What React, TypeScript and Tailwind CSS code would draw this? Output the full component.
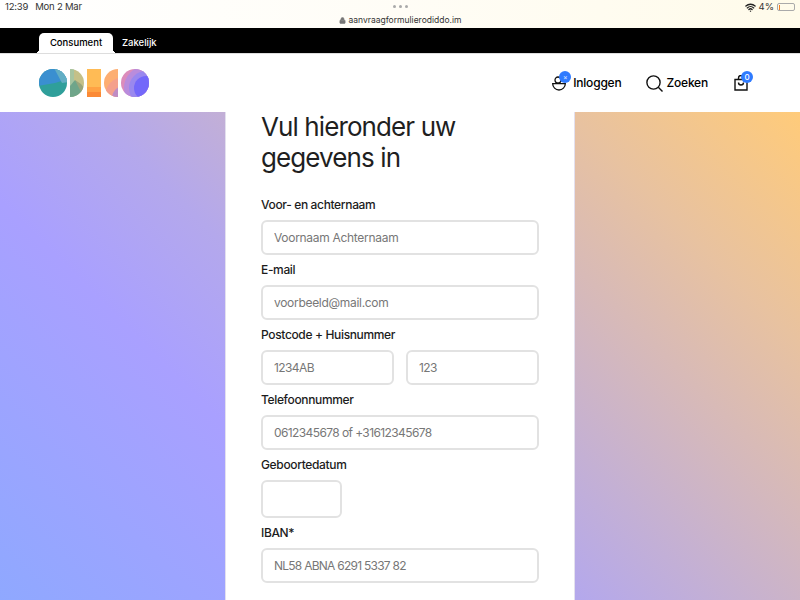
import { Lock, Wifi } from 'lucide-react';

const sans = "font-['Inter','Noto_Sans',sans-serif]";
const inputClass = "block h-[35px] rounded-md border-2 border-[#e2e2e2] bg-white px-[11px] text-[12px] placeholder:text-[#777]";

function Logo() {
    return (
        <svg width="112" height="30" viewBox="0 0 112 30" className="block">
            <defs>
                <clipPath id="c1"><circle cx="15" cy="15" r="14" /></clipPath>
                <clipPath id="c2"><path d="M32 1a14 14 0 0 1 0 28z" /></clipPath>
                <clipPath id="c3"><rect x="49" y="1" width="14" height="28" /></clipPath>
                <clipPath id="c4"><path d="M80 1a14 14 0 0 0 0 28z" /></clipPath>
                <clipPath id="c5"><circle cx="97" cy="15" r="14" /></clipPath>
            </defs>
            <g clipPath="url(#c1)">
                <rect width="30" height="30" fill="#2f9f9a" />
                <path d="M0 0h30v11l-13 4-17 3z" fill="#3a8fd0" />
                <path d="M16 0h14v14l-6 1z" fill="#62aec4" />
            </g>
            <g clipPath="url(#c2)">
                <rect x="32" width="15" height="30" fill="#c4c088" />
                <path d="M32 0h4v30h-4z" fill="#a6c4a0" />
                <path d="M32 29V18l5-6 9 10-8 8z" fill="#6fa58a" />
                <path d="M37 12l6 4 4 5-4 3z" fill="#9aa57c" />
            </g>
            <g clipPath="url(#c3)">
                <rect x="49" width="14" height="30" fill="#ffbb55" />
                <rect x="49" y="19" width="14" height="5" fill="#ffa244" />
                <rect x="49" y="24" width="14" height="6" fill="#fb8a36" />
            </g>
            <g clipPath="url(#c4)">
                <rect x="66" width="14" height="30" fill="#fdae72" />
                <circle cx="86" cy="28" r="19" fill="#f4a08c" />
                <circle cx="86" cy="30" r="12" fill="#bf8cc4" />
            </g>
            <g clipPath="url(#c5)">
                <rect x="83" width="28" height="30" fill="#dc8cbc" />
                <circle cx="108" cy="20" r="22" fill="#b98cdc" />
                <circle cx="108" cy="20" r="17" fill="#9a88ee" />
                <circle cx="108" cy="20" r="12" fill="#7468fa" />
            </g>
        </svg>
    );
}

function Field({ label, placeholder, tracking }: { label: string; placeholder: string; tracking: string }) {
    return (
        <div>
            <label className="block h-5 text-[12px] leading-5 font-medium tracking-[-0.35px] text-[#1c1c1c]">{label}</label>
            <input className={`${inputClass} my-[5px] w-full ${tracking}`} placeholder={placeholder} />
        </div>
    );
}

export default function App() {
    return (
        <div className={`flex h-[600px] w-[800px] flex-col overflow-hidden bg-white ${sans}`}>
            <div className="relative h-7 bg-gradient-to-r from-white via-[#fffdf6] to-[#fffbea] text-[#333]">
                <div className="flex items-center justify-between pl-[5px] pr-[5px] pt-[1px]">
                    <div className="flex gap-[7px] text-[9.5px] leading-3 tracking-[-0.2px]"><span>12:39</span><span>Mon 2 Mar</span></div>
                    <div className="flex items-center gap-[3px] text-[9.5px] leading-3">
                        <Wifi size={11} strokeWidth={3} className="text-[#222]" />
                        <span>4%</span>
                        <span className="flex h-[8px] w-[18px] items-center rounded-[2px] border border-[#aaa] pl-[1px]">
                            <span className="h-[5px] w-[1px] bg-[#f57c1f]" />
                        </span>
                    </div>
                </div>
                <div className="absolute inset-x-0 top-[5px] flex justify-center gap-[3px]">
                    <span className="size-[3px] rounded-full bg-[#aaa]" />
                    <span className="size-[3px] rounded-full bg-[#aaa]" />
                    <span className="size-[3px] rounded-full bg-[#aaa]" />
                </div>
                <div className="absolute inset-x-0 top-[14px] flex items-center justify-center gap-[3px] text-[8.5px] leading-3">
                    <Lock size={7} className="text-[#777]" fill="#777" />
                    <span>aanvraagformulierodiddo.im</span>
                </div>
            </div>

            <div className="flex h-[25px] items-end bg-black pl-[39px] text-[9.5px] font-medium">
                <div className="relative flex h-[20px] w-[74px] items-center justify-center rounded-t-[5px] bg-white text-black">
                    Consument
                    <span className="absolute bottom-0 left-[-4px] size-1 bg-[radial-gradient(circle_at_0_0,transparent_4px,white_4px)]" />
                    <span className="absolute bottom-0 right-[-4px] size-1 bg-[radial-gradient(circle_at_100%_0,transparent_4px,white_4px)]" />
                </div>
                <div className="flex h-[20px] items-center pl-[9px] text-white">Zakelijk</div>
            </div>

            <header className="flex h-[59px] items-center justify-between border-t border-[#ddd] bg-white pl-[38px] pr-[51px]">
                <Logo />
                <nav className="flex items-center text-[12px] font-medium tracking-[-0.2px] text-black">
                    <div className="flex items-center gap-[7px]">
                        <span className="relative block h-4 w-[14px]">
                            <svg width="14" height="16" viewBox="0 0 14 16" fill="none" stroke="#111" strokeWidth="1.3" className="absolute left-0 top-0">
                                <circle cx="6" cy="5" r="3" />
                                <path d="M.7 8.7h12.6a6.3 6.3 0 0 1-12.6 0z" />
                            </svg>
                            <span className="absolute left-[7px] top-[-4px] flex size-[12px] items-center justify-center rounded-full bg-[#2f7bff] text-[7px] leading-none text-[#cfe0ff]">×</span>
                        </span>
                        <span>Inloggen</span>
                    </div>
                    <div className="ml-[24px] flex items-center gap-[4px]">
                        <svg width="17" height="17" viewBox="0 0 17 17" fill="none" stroke="#111" strokeWidth="1.4">
                            <circle cx="7.5" cy="7.5" r="6.6" />
                            <path d="M12.3 12.3l4.2 4.2" />
                        </svg>
                        <span>Zoeken</span>
                    </div>
                    <div className="relative ml-[25px] size-[16px]">
                        <svg width="14" height="16" viewBox="0 0 14 16" fill="none" stroke="#111" strokeWidth="1.4" className="absolute left-[1px] top-0">
                            <path d="M1 4.5h12v10.5H1z" />
                            <path d="M4.5 4.5V3a2.5 2.5 0 0 1 5 0v1.5" />
                            <path d="M4.5 7.5a2.5 2.5 0 0 0 5 0" />
                        </svg>
                        <span className="absolute left-[8px] top-[-4px] flex size-[12px] items-center justify-center rounded-full bg-[#2f7bff] text-[8px] leading-none text-white">0</span>
                    </div>
                </nav>
            </header>

            <main className="flex min-h-0 flex-1 justify-center bg-[linear-gradient(45deg,#8fa8ff,#a9a0ff_31%,#b4a8ec_45%,#ccb4c8_62%,#e8c2a0_82%,#ffcb7a)]">
                <div className="h-full w-[350px] border-x border-[#e3e0ee] bg-white px-[35px] text-[#1c1c1c]">
                    <h1 className="-mt-px text-[26px] leading-[31px] font-normal tracking-[-0.9px] text-[#1f1f1f]">Vul hieronder uw<br />gegevens in</h1>
                    <div className="mt-[22px]">
                        <Field label="Voor- en achternaam" placeholder="Voornaam Achternaam" tracking="tracking-[-0.3px]" />
                        <Field label="E-mail" placeholder="voorbeeld@mail.com" tracking="tracking-[-0.3px]" />
                        <div>
                            <label className="block h-5 text-[12px] leading-5 font-medium tracking-[-0.35px]">Postcode + Huisnummer</label>
                            <div className="my-[5px] flex gap-3">
                                <input className={`${inputClass} w-0 flex-1 tracking-[-0.6px]`} placeholder="1234AB" />
                                <input className={`${inputClass} w-0 flex-1 tracking-[-0.6px]`} placeholder="123" />
                            </div>
                        </div>
                        <Field label="Telefoonnummer" placeholder="0612345678 of +31612345678" tracking="tracking-[-0.6px]" />
                        <div>
                            <label className="block h-5 text-[12px] leading-5 font-medium tracking-[-0.35px]">Geboortedatum</label>
                            <input className="my-[5px] block h-[38px] w-[81px] rounded-md border-2 border-[#e2e2e2]" />
                        </div>
                        <Field label="IBAN*" placeholder="NL58 ABNA 6291 5337 82" tracking="tracking-[-0.75px]" />
                    </div>
                </div>
            </main>
        </div>
    );
}
